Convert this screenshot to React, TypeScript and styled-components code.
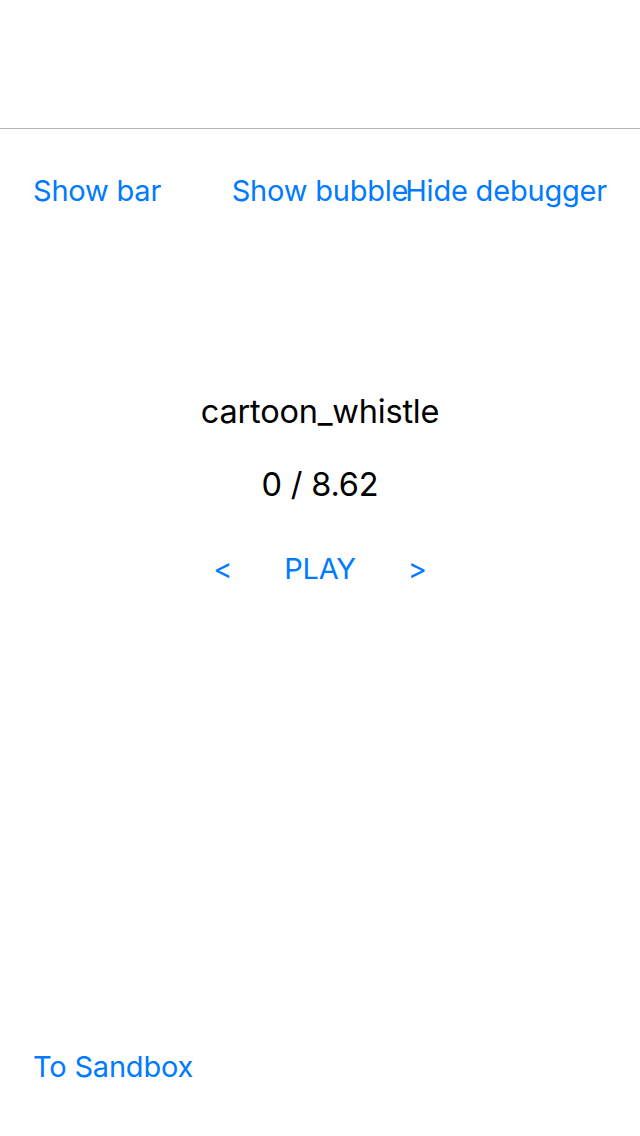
import React from "react";
import styled, { createGlobalStyle } from "styled-components";

const Global = createGlobalStyle`
  html, body { margin: 0; padding: 0; background: #fff; }
  body { font-family: Inter, "Noto Sans", sans-serif; -webkit-font-smoothing: antialiased; }
`;

const Screen = styled.div`
  width: 640px;
  height: 1136px;
  display: flex;
  flex-direction: column;
  background: #fff;
`;

const NavBar = styled.div`
  height: 128px;
  border-bottom: 1px solid #b2b2b2;
  flex-shrink: 0;
`;

const ButtonRow = styled.div`
  display: flex;
  padding: 34px 33px 0 33px;
`;

const Cell = styled.div<{ $align: "flex-start" | "center" | "flex-end" }>`
  flex: 1 1 0;
  min-width: 0;
  display: flex;
  justify-content: ${(p) => p.$align};
`;

const LinkButton = styled.button`
  background: none;
  border: none;
  padding: 0;
  margin: 0;
  font-family: Inter, "Noto Sans", sans-serif;
  font-size: 29px;
  line-height: 56px;
  color: #007aff;
  white-space: nowrap;
  cursor: pointer;
  letter-spacing: -0.2px;
`;

const Player = styled.div`
  display: flex;
  flex-direction: column;
  align-items: center;
  margin-top: 173px;
`;

const Title = styled.div`
  font-size: 32.5px;
  line-height: 40px;
  color: #000;
  letter-spacing: -0.2px;
`;

const Time = styled.div`
  margin-top: 33px;
  font-size: 32.5px;
  line-height: 40px;
  color: #000;
  letter-spacing: -0.2px;
`;

const Controls = styled.div`
  margin-top: 36px;
  display: flex;
  align-items: center;
  gap: 52px;
`;

const Spacer = styled.div`
  flex: 1;
`;

const Footer = styled.div`
  padding: 0 0 41px 33px;
`;

export default function App() {
  return (
    <Screen>
      <Global />
      <NavBar />
      <ButtonRow>
        <Cell $align="flex-start">
          <LinkButton>Show bar</LinkButton>
        </Cell>
        <Cell $align="center">
          <LinkButton>Show bubble</LinkButton>
        </Cell>
        <Cell $align="flex-end">
          <LinkButton>Hide debugger</LinkButton>
        </Cell>
      </ButtonRow>
      <Player>
        <Title>cartoon_whistle</Title>
        <Time>0 / 8.62</Time>
        <Controls>
          <LinkButton>&lt;</LinkButton>
          <LinkButton>PLAY</LinkButton>
          <LinkButton>&gt;</LinkButton>
        </Controls>
      </Player>
      <Spacer />
      <Footer>
        <LinkButton>To Sandbox</LinkButton>
      </Footer>
    </Screen>
  );
}
